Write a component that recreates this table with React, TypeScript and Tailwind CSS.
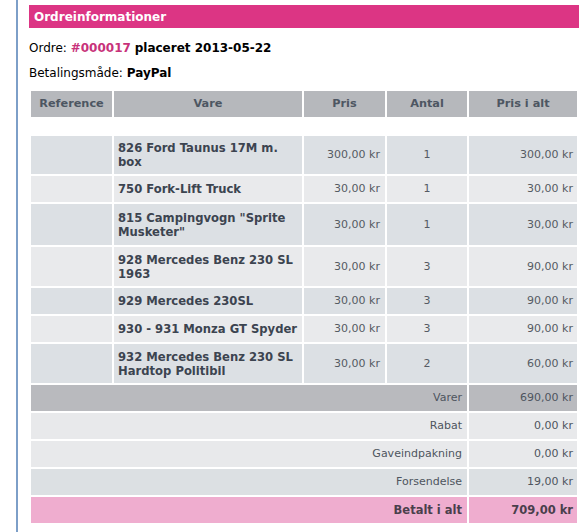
import React from 'react';

type Item = { name: string; price: string; qty: number; total: string; h: string };

const ITEMS: Item[] = [
  { name: '826 Ford Taunus 17M m. box', price: '300,00 kr', qty: 1, total: '300,00 kr', h: 'h-[38px]' },
  { name: '750 Fork-Lift Truck', price: '30,00 kr', qty: 1, total: '30,00 kr', h: 'h-[26px]' },
  { name: '815 Campingvogn "Sprite Musketer"', price: '30,00 kr', qty: 1, total: '30,00 kr', h: 'h-[41px]' },
  { name: '928 Mercedes Benz 230 SL 1963', price: '30,00 kr', qty: 3, total: '90,00 kr', h: 'h-[39px]' },
  { name: '929 Mercedes 230SL', price: '30,00 kr', qty: 3, total: '90,00 kr', h: 'h-[26px]' },
  { name: '930 - 931 Monza GT Spyder', price: '30,00 kr', qty: 3, total: '90,00 kr', h: 'h-[26px]' },
  { name: '932 Mercedes Benz 230 SL Hardtop Politibil', price: '30,00 kr', qty: 2, total: '60,00 kr', h: 'h-[39px]' },
];

const TOTALS = [
  { label: 'Varer', value: '690,00 kr', bg: 'bg-[#b9babe]' },
  { label: 'Rabat', value: '0,00 kr', bg: 'bg-[#e8e9eb]' },
  { label: 'Gaveindpakning', value: '0,00 kr', bg: 'bg-[#e8e9eb]' },
  { label: 'Forsendelse', value: '19,00 kr', bg: 'bg-[#dce0e3]' },
];

export default function App() {
  return (
    <div className="h-[532px] w-[588px] bg-white pl-4 font-['DejaVu_Sans',Verdana,sans-serif]">
      <div className="h-full border-l-2 border-[#7d9fc8] pl-[11px] pr-[9px] pt-[5px]">
        <div className="flex h-[23px] items-center bg-[#dc3584] px-[5px] text-[12px] font-bold text-white">
          Ordreinformationer
        </div>

        <p className="mt-[13px] text-[12px] leading-[14px] text-black">
          Ordre: <span className="font-bold text-[#c8327a]">#000017</span>{' '}
          <span className="font-bold">placeret 2013-05-22</span>
        </p>
        <p className="mt-[11px] text-[12px] leading-[14px] text-black">
          Betalingsmåde: <span className="font-bold">PayPal</span>
        </p>

        <table className="mt-[9px] w-[550px] table-fixed border-separate border-spacing-[2px] text-[11px] leading-[14px]">
          <thead>
            <tr className="bg-[#b6b8bc] text-[11.3px] font-bold text-[#4d5662]">
              <th className="h-[26px] w-[81px] px-1">Reference</th>
              <th className="w-[188px] px-1">Vare</th>
              <th className="w-[81px] px-1">Pris</th>
              <th className="w-[80px] px-1">Antal</th>
              <th className="w-[108px] px-1">Pris i alt</th>
            </tr>
          </thead>
          <tbody>
            <tr>
              <td colSpan={5} className="h-[15px]"></td>
            </tr>
            {ITEMS.map((item, i) => (
              <tr key={item.name} className={i % 2 === 0 ? 'bg-[#dce0e4]' : 'bg-[#e9eaec]'}>
                <td className={`${item.h} px-1`}></td>
                <td className="px-1 text-[11.6px] font-bold text-[#3c4450]">{item.name}</td>
                <td className="pr-[5px] text-right text-[#555b63]">{item.price}</td>
                <td className="text-center text-[#555b63]">{item.qty}</td>
                <td className="pr-[4px] text-right text-[#555b63]">{item.total}</td>
              </tr>
            ))}
            {TOTALS.map(t => (
              <tr key={t.label} className={t.bg}>
                <td colSpan={4} className="h-[26px] pr-[5px] text-right text-[#4e555e]">{t.label}</td>
                <td className="pr-[4px] text-right text-[#4e555e]">{t.value}</td>
              </tr>
            ))}
            <tr className="bg-[#efadcf] text-[11.5px] font-bold text-[#4a3f4c]">
              <td colSpan={4} className="h-[26px] pr-[5px] text-right">Betalt i alt</td>
              <td className="pr-[4px] text-right">709,00 kr</td>
            </tr>
          </tbody>
        </table>
      </div>
    </div>
  );
}
